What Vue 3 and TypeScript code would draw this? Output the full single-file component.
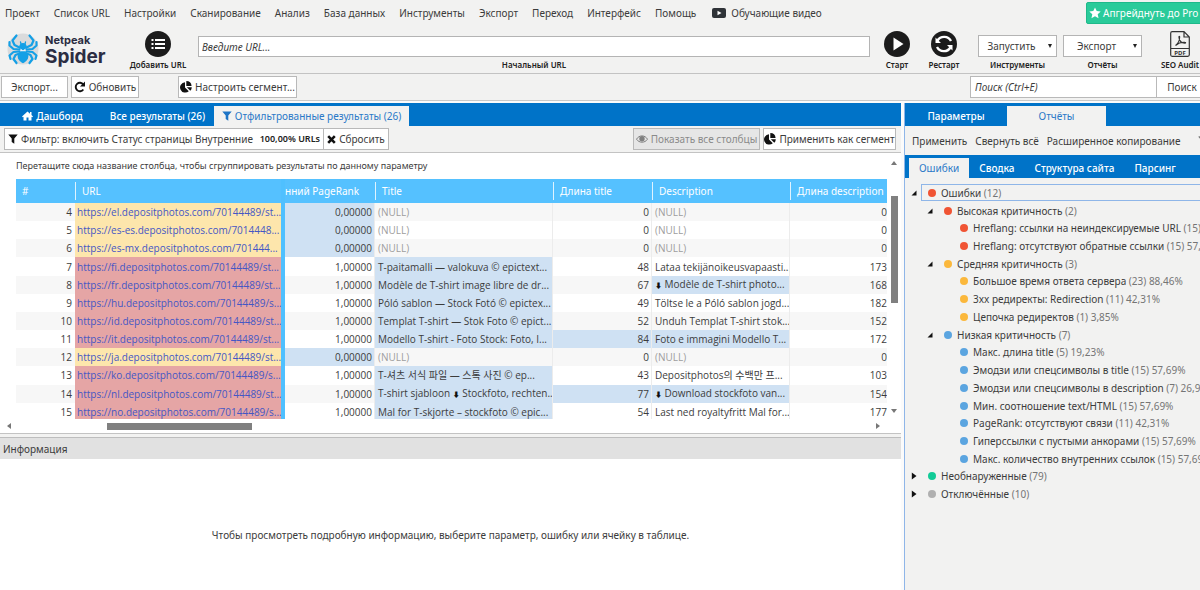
<script setup lang="ts">
import { ref } from 'vue'

type Severity = 'high' | 'mid' | 'low' | 'ok' | 'off'

interface ResultRow {
  id: number
  url: string
  warn: boolean
  rank: string
  title: string
  titleLen: number
  longTitle: boolean
  description: string
  markDescription: boolean
  descriptionLen: number
}

interface TreeRow {
  level: number
  arrow: '' | 'open' | 'closed'
  severity: Severity
  label: string
  stat: string
}

const menu: string[] = [
  'Проект', 'Список URL', 'Настройки', 'Сканирование', 'Анализ', 'База данных',
  'Инструменты', 'Экспорт', 'Переход', 'Интерфейс', 'Помощь',
]

const NULL = '(NULL)'
const DOWN = '⬇'

// Splits a cell text so that the arrow symbol gets its own element.
function parts(text: string): string[] {
  return text.split(/(⬇)/).filter(Boolean)
}

function empty(id: number, url: string): ResultRow {
  return {
    id, url, warn: true, rank: '0,00000', title: NULL, titleLen: 0, longTitle: false,
    description: NULL, markDescription: false, descriptionLen: 0,
  }
}

function filled(
  id: number, url: string, title: string, titleLen: number, longTitle: boolean,
  description: string, markDescription: boolean, descriptionLen: number,
): ResultRow {
  return {
    id, url, warn: false, rank: '1,00000', title, titleLen, longTitle,
    description, markDescription, descriptionLen,
  }
}

const rows: ResultRow[] = [
  empty(4, 'https://el.depositphotos.com/70144489/st...'),
  empty(5, 'https://es-es.depositphotos.com/7014448...'),
  empty(6, 'https://es-mx.depositphotos.com/701444...'),
  filled(7, 'https://fi.depositphotos.com/70144489/st...', 'T-paitamalli — valokuva © epictext...', 48, false, 'Lataa tekijänoikeusvapaasti...', false, 173),
  filled(8, 'https://fr.depositphotos.com/70144489/st...', 'Modèle de T-shirt image libre de dr...', 67, false, '⬇ Modèle de T-shirt photo...', true, 168),
  filled(9, 'https://hu.depositphotos.com/70144489/s...', 'Póló sablon — Stock Fotó © epictex...', 49, false, 'Töltse le a Póló sablon jogd...', false, 182),
  filled(10, 'https://id.depositphotos.com/70144489/st...', 'Templat T-shirt — Stok Foto © epict...', 52, false, 'Unduh Templat T-shirt stok...', false, 152),
  filled(11, 'https://it.depositphotos.com/70144489/st...', 'Modello T-shirt - Foto Stock: Foto, I...', 84, true, 'Foto e immagini Modello T...', true, 172),
  empty(12, 'https://ja.depositphotos.com/70144489/st...'),
  filled(13, 'https://ko.depositphotos.com/70144489/s...', 'T-셔츠 서식 파일 — 스톡 사진 © ep...', 43, false, 'Depositphotos의 수백만 프...', false, 103),
  filled(14, 'https://nl.depositphotos.com/70144489/st...', 'T-shirt sjabloon ⬇ Stockfoto, rechten...', 77, true, '⬇ Download stockfoto van...', true, 154),
  filled(15, 'https://no.depositphotos.com/70144489/s...', 'Mal for T-skjorte – stockfoto © epic...', 54, false, 'Last ned royaltyfritt Mal for...', false, 177),
]

const tree: TreeRow[] = [
  { level: 0, arrow: 'open', severity: 'high', label: 'Ошибки', stat: '(12)' },
  { level: 1, arrow: 'open', severity: 'high', label: 'Высокая критичность', stat: '(2)' },
  { level: 2, arrow: '', severity: 'high', label: 'Hreflang: ссылки на неиндексируемые URL', stat: '(15) 57,69%' },
  { level: 2, arrow: '', severity: 'high', label: 'Hreflang: отсутствуют обратные ссылки', stat: '(15) 57,69%' },
  { level: 1, arrow: 'open', severity: 'mid', label: 'Средняя критичность', stat: '(3)' },
  { level: 2, arrow: '', severity: 'mid', label: 'Большое время ответа сервера', stat: '(23) 88,46%' },
  { level: 2, arrow: '', severity: 'mid', label: '3xx редиректы: Redirection', stat: '(11) 42,31%' },
  { level: 2, arrow: '', severity: 'mid', label: 'Цепочка редиректов', stat: '(1) 3,85%' },
  { level: 1, arrow: 'open', severity: 'low', label: 'Низкая критичность', stat: '(7)' },
  { level: 2, arrow: '', severity: 'low', label: 'Макс. длина title', stat: '(5) 19,23%' },
  { level: 2, arrow: '', severity: 'low', label: 'Эмодзи или спецсимволы в title', stat: '(15) 57,69%' },
  { level: 2, arrow: '', severity: 'low', label: 'Эмодзи или спецсимволы в description', stat: '(7) 26,92%' },
  { level: 2, arrow: '', severity: 'low', label: 'Мин. соотношение text/HTML', stat: '(15) 57,69%' },
  { level: 2, arrow: '', severity: 'low', label: 'PageRank: отсутствуют связи', stat: '(11) 42,31%' },
  { level: 2, arrow: '', severity: 'low', label: 'Гиперссылки с пустыми анкорами', stat: '(15) 57,69%' },
  { level: 2, arrow: '', severity: 'low', label: 'Макс. количество внутренних ссылок', stat: '(15) 57,69%' },
  { level: 0, arrow: 'closed', severity: 'ok', label: 'Необнаруженные', stat: '(79)' },
  { level: 0, arrow: 'closed', severity: 'off', label: 'Отключённые', stat: '(10)' },
]

const startUrl = ref('')
const search = ref('')
</script>

<template>
  <div class="app">
    <header class="header">
      <nav class="menu">
        <button v-for="item in menu" :key="item" type="button">{{ item }}</button>
        <button type="button" class="video">
          <svg width="14" height="10" viewBox="0 0 14 10"><rect width="14" height="10" rx="2" fill="#2f3338" /><path d="M5.5 2.8 9.5 5 5.5 7.2z" fill="#fff" /></svg>
          <span>Обучающие видео</span>
        </button>
        <button type="button" class="upgrade">
          <svg width="12" height="12" viewBox="0 0 24 24"><path d="M12 .8l3.4 7.4 8 .9-6 5.5 1.700 8-7.100-4-7.100 4 1.700-8-6-5.500 8-.9z" fill="#fff" /></svg>
          <span>Апгрейднуть до Pro</span>
        </button>
      </nav>

      <div class="main-bar">
        <div class="logo">
          <svg width="32" height="34" viewBox="0 0 32 34">
            <circle cx="16" cy="17" r="15.500" fill="#dadbdc" />
            <g fill="none" stroke="#14a0e6" stroke-width="2.200" stroke-linecap="round" stroke-linejoin="round">
              <path d="M12.500 15.500 7.500 13 5.500 8.500 9.500 3.500" />
              <path d="M19.500 15.500 24.500 13 26.500 8.500 22.500 3.500" />
              <path d="M12.500 17.500 6.500 17 2.500 13.500 2.500 10" />
              <path d="M19.500 17.500 25.500 17 29.500 13.500 29.500 10" />
              <path d="M12.500 19.500 6.500 20 2.500 23.500 3.500 27" />
              <path d="M19.500 19.500 25.500 20 29.500 23.500 28.500 27" />
              <path d="M12.500 21.500 8.500 23 6.500 27 9.500 31" />
              <path d="M19.500 21.500 23.500 23 25.500 27 22.500 31" />
              <path d="M14 12 13.500 10M18 12 18.500 10" stroke-width="1.300" />
            </g>
            <path d="M16 11c2.500 0 3.800 1.800 3.800 4 0 1.500-.6 2.500-1.500 3.200h-4.600c-.9-.7-1.500-1.700-1.500-3.200 0-2.200 1.300-4 3.800-4z" fill="#14a0e6" />
            <path d="M14 19h4c2.200 1.600 3.300 3.400 3.300 5.500 0 3-2.500 5.500-5.300 6.700-2.800-1.200-5.300-3.700-5.300-6.700 0-2.100 1.100-3.900 3.300-5.500z" fill="#14a0e6" />
            <path d="M13.500 16.500 16 18.500 18.500 16.500V19.200H13.500z" fill="#eef4f8" />
          </svg>
          <div class="logo-text">
            <span class="brand">Netpeak</span>
            <span class="product">Spider</span>
          </div>
        </div>

        <button type="button" class="tool add">
          <svg width="26" height="26" viewBox="0 0 26 26">
            <circle cx="13" cy="13" r="13" fill="#1c1c1c" />
            <path d="M10 9h10M10 13h10M10 17h10" stroke="#fff" stroke-width="2" />
            <path d="M6.500 9h2M6.500 13h2M6.500 17h2" stroke="#fff" stroke-width="2" />
          </svg>
          <span>Добавить URL</span>
        </button>

        <div class="field url">
          <input id="start-url" v-model="startUrl" type="text" placeholder="Введите URL...">
          <label for="start-url">Начальный URL</label>
        </div>

        <button type="button" class="tool start">
          <svg width="26" height="26" viewBox="0 0 26 26"><circle cx="13" cy="13" r="13" fill="#1c1c1c" /><path d="M9.500 6.500 19.500 13 9.500 19.500z" fill="#fff" /></svg>
          <span>Старт</span>
        </button>
        <button type="button" class="tool restart">
          <svg width="26" height="26" viewBox="0 0 26 26">
            <circle cx="13" cy="13" r="13" fill="#1c1c1c" />
            <path d="M6.500 9.500a7.800 7.800 0 0 1 13.500.500" fill="none" stroke="#fff" stroke-width="2.400" />
            <path d="M19.500 16.500a7.800 7.800 0 0 1-13.500-.500" fill="none" stroke="#fff" stroke-width="2.400" />
            <path d="M4.500 6.500v5.500h5.500zM21.500 19.500v-5.500h-5.500z" fill="#fff" />
          </svg>
          <span>Рестарт</span>
        </button>

        <div class="field pick">
          <span class="select"><select id="tools"><option>Запустить</option></select></span>
          <label for="tools">Инструменты</label>
        </div>
        <div class="field pick second">
          <span class="select"><select id="reports"><option>Экспорт</option></select></span>
          <label for="reports">Отчёты</label>
        </div>

        <button type="button" class="tool pdf">
          <svg width="20" height="26" viewBox="0 0 20 26">
            <path d="M.7 17.500V2.200Q.7.700 2.200.700H14l5.300 5.300v11.500M14 .7V6h5.300M.7 17.500h18.600v6.300q0 1.500-1.500 1.500H2.200q-1.500 0-1.500-1.500z" fill="none" stroke="#333" stroke-width="1.200" />
            <path d="M5.500 14.500c2.500-1.800 4-5 4.200-8.500.1-1-.9-1-.8 0 .2 3.500 2.500 6 6 6.300 1 0 1-1 0-1-3.300-.2-6.500.7-9.400 3.200z" fill="none" stroke="#333" stroke-width="1.100" />
            <text x="10" y="23.500" font-size="6" font-weight="700" text-anchor="middle" fill="#333">PDF</text>
          </svg>
          <span>SEO Audit</span>
        </button>
      </div>
    </header>

    <div class="sub-bar">
      <button type="button" class="btn export">Экспорт...</button>
      <button type="button" class="btn refresh">
        <svg width="12" height="12" viewBox="0 0 12 12"><path d="M9.300 8.500a4.200 4.200 0 1 1 0-5" fill="none" stroke="#111" stroke-width="1.900" /><path d="M11 .5v5H6z" fill="#111" /></svg>
        <span>Обновить</span>
      </button>
      <button type="button" class="btn segment">
        <svg width="12" height="12" viewBox="0 0 12 12"><path d="M5 1.200V6.500L8.800 10.200A5.200 5.200 0 1 1 5 1.200z" fill="#111" /><path d="M6.300 0A5.500 5.500 0 0 1 11.600 5H6.300z" fill="#111" /><path d="M6.800 6.200h5a5 5 0 0 1-1.500 3.500z" fill="#111" /></svg>
        <span>Настроить сегмент...</span>
      </button>
      <input v-model="search" type="text" class="search" placeholder="Поиск (Ctrl+E)" aria-label="Поиск">
      <button type="button" class="btn find">Поиск</button>
    </div>

    <div class="workspace">
      <main class="left">
        <div class="tabs">
          <button type="button" class="tab dash">
            <svg width="11" height="10" viewBox="0 0 22 20"><path d="M11 1 0 11l1.500 1.600L3 11.300V19h6v-6h4v6h6v-7.700l1.500 1.300L22 11l-3-2.800V2h-3v3.500z" fill="#fff" /></svg>
            <span>Дашборд</span>
          </button>
          <button type="button" class="tab all">Все результаты (26)</button>
          <button type="button" class="tab filtered active">
            <svg width="10" height="10" viewBox="0 0 10 10"><path d="M.3.500h9.400L6.300 4.500V9.800L3.700 8V4.500z" fill="#1d74c6" /></svg>
            <span>Отфильтрованные результаты (26)</span>
          </button>
        </div>

        <div class="filter-bar">
          <button type="button" class="btn filter">
            <svg width="10" height="10" viewBox="0 0 10 10"><path d="M.3.500h9.400L6.300 4.500V9.800L3.700 8V4.500z" fill="#111" /></svg>
            <span>Фильтр: включить Статус страницы Внутренние</span>
            <strong>100,00% URLs</strong>
          </button>
          <button type="button" class="btn reset">
            <svg width="9" height="9" viewBox="0 0 9 9"><path d="M1.200 1.200 7.800 7.800M7.800 1.200 1.200 7.800" stroke="#111" stroke-width="2.600" /></svg>
            <span>Сбросить</span>
          </button>
          <button type="button" class="btn show" disabled>
            <svg width="12" height="8" viewBox="0 0 12 8"><path d="M.5 4.200C3-.2 9-.2 11.500 4.200 9 8.200 3 8.200.5 4.200z" fill="none" stroke="#808080" /><circle cx="6" cy="3.800" r="2.700" fill="#808080" /></svg>
            <span>Показать все столбцы</span>
          </button>
          <button type="button" class="btn apply">
            <svg width="12" height="12" viewBox="0 0 12 12"><path d="M5 1.200V6.500L8.800 10.200A5.200 5.200 0 1 1 5 1.200z" fill="#111" /><path d="M6.300 0A5.500 5.500 0 0 1 11.600 5H6.300z" fill="#111" /><path d="M6.800 6.200h5a5 5 0 0 1-1.500 3.500z" fill="#111" /></svg>
            <span>Применить как сегмент</span>
          </button>
        </div>

        <section class="grid-area">
          <div class="grid-row">
            <div class="grid-main">
              <p class="group-hint">Перетащите сюда название столбца, чтобы сгруппировать результаты по данному параметру</p>
              <div class="table-wrap">
                <table>
                  <colgroup>
                    <col class="c-id"><col class="c-url"><col class="c-rank"><col class="c-title">
                    <col class="c-tlen"><col class="c-desc"><col class="c-dlen">
                  </colgroup>
                  <thead>
                    <tr>
                      <th><span>#</span></th>
                      <th><span>URL</span></th>
                      <th class="cut"><span>нний PageRank</span></th>
                      <th><span>Title</span></th>
                      <th><span>Длина title</span></th>
                      <th><span>Description</span></th>
                      <th><span>Длина description</span></th>
                    </tr>
                  </thead>
                  <tbody>
                    <tr v-for="row in rows" :key="row.id">
                      <td class="num id">{{ row.id }}</td>
                      <td class="url" :class="row.warn ? 'warn' : 'bad'"><a href="#">{{ row.url }}</a></td>
                      <td class="num rank" :class="{ mark: row.warn }">{{ row.rank }}</td>
                      <td :class="row.warn ? 'null' : 'mark'">
                        <span v-for="(part, p) in parts(row.title)" :key="p" :class="{ down: part === DOWN }">{{ part }}</span>
                      </td>
                      <td class="num" :class="{ mark: row.longTitle }">{{ row.titleLen }}</td>
                      <td :class="{ null: row.warn, mark: row.markDescription }">
                        <span v-for="(part, p) in parts(row.description)" :key="p" :class="{ down: part === DOWN }">{{ part }}</span>
                      </td>
                      <td class="num last">{{ row.descriptionLen }}</td>
                    </tr>
                  </tbody>
                </table>
              </div>
            </div>
            <div class="vscroll">
              <svg width="6" height="4" viewBox="0 0 6 4"><path d="M0 4 3 0 6 4z" fill="#777" /></svg>
              <div class="vtrack"><div class="vthumb"></div></div>
              <svg width="6" height="4" viewBox="0 0 6 4"><path d="M0 0 3 4 6 0z" fill="#777" /></svg>
            </div>
          </div>
          <div class="hscroll">
            <svg width="4" height="6" viewBox="0 0 4 6"><path d="M4 0 0 3 4 6z" fill="#777" /></svg>
            <div class="htrack"><div class="hthumb"></div></div>
            <svg width="4" height="6" viewBox="0 0 4 6"><path d="M0 0 4 3 0 6z" fill="#777" /></svg>
          </div>
        </section>

        <section class="info">
          <h2>Информация</h2>
          <p>Чтобы просмотреть подробную информацию, выберите параметр, ошибку или ячейку в таблице.</p>
        </section>
      </main>

      <aside class="right">
        <div class="tabs">
          <button type="button" class="tab params">Параметры</button>
          <button type="button" class="tab reports active">Отчёты</button>
        </div>
        <div class="report-tools">
          <button type="button">Применить</button>
          <button type="button">Свернуть всё</button>
          <button type="button">Расширенное копирование</button>
          <button type="button" class="more" aria-label="Фильтр">
            <svg width="10" height="10" viewBox="0 0 10 10"><path d="M.8.800h8.400L6 4.500V9.500L4 8V4.500z" fill="none" stroke="#777" /></svg>
          </button>
        </div>
        <div class="tabs inner">
          <button type="button" class="tab active">Ошибки</button>
          <button type="button" class="tab">Сводка</button>
          <button type="button" class="tab">Структура сайта</button>
          <button type="button" class="tab">Парсинг</button>
        </div>
        <ul class="tree">
          <li v-for="(node, i) in tree" :key="node.label" :class="'level-' + node.level">
            <svg class="arrow" width="6" height="8" viewBox="0 0 6 8">
              <path v-if="node.arrow === 'open'" d="M5.500 1.500V6.500H.5z" fill="#111" />
              <path v-else-if="node.arrow === 'closed'" d="M.8.500 5.500 4 .8 7.500z" fill="#111" />
            </svg>
            <span class="node" :class="{ selected: i === 0 }">
              <i class="dot" :class="node.severity"></i>
              <span class="label">{{ node.label }} <small>{{ node.stat }}</small></span>
            </span>
          </li>
        </ul>
      </aside>
    </div>
  </div>
</template>

<style>
html,
body {
  margin: 0;
  background: #f2f2f1;
}
</style>

<style scoped>
.app {
  box-sizing: border-box;
  display: flex;
  flex-direction: column;
  min-height: 100vh;
  overflow: hidden;
  background: #f2f2f1;
  color: #3c3c3c;
  font: 10px/14px "Noto Sans", "Noto Sans CJK KR", "DejaVu Sans", sans-serif;
  white-space: nowrap;
}
.app *,
.app *::before {
  box-sizing: border-box;
}
button,
input,
select {
  margin: 0;
  padding: 0;
  border: 0;
  border-radius: 0;
  background: none;
  color: inherit;
  font: inherit;
  white-space: nowrap;
}
svg {
  flex: none;
  display: block;
}

.header {
  height: 74px;
  border-bottom: 1px solid #c3c3c3;
}
.menu {
  display: flex;
  align-items: center;
  gap: 14px;
  height: 25px;
  padding-left: 5px;
}
.menu button {
  flex: none;
}
.menu .video {
  display: flex;
  align-items: center;
  gap: 5px;
  margin-left: 2px;
}
.menu .upgrade {
  display: flex;
  align-items: center;
  gap: 2px;
  width: 120px;
  height: 22px;
  margin-right: -6px;
  margin-left: auto;
  padding-left: 2px;
  border: 1px solid #1fb98a;
  border-radius: 2px;
  background: #2acb9a;
  color: #fff;
}
.main-bar {
  display: flex;
  height: 48px;
  padding: 6px 0 0 7px;
}
.logo {
  display: flex;
  align-items: center;
  gap: 6px;
  width: 118px;
  height: 36px;
  color: #2b2d42;
  font-family: Inter, "Noto Sans", sans-serif;
}
.logo-text {
  display: flex;
  flex-direction: column;
  padding-top: 2px;
}
.brand {
  font-size: 11px;
  line-height: 13px;
  font-weight: 700;
}
.product {
  font-size: 19px;
  line-height: 19px;
  font-weight: 700;
}
.tool {
  flex: none;
  display: flex;
  flex-direction: column;
  align-items: center;
  justify-content: flex-start;
  height: 42px;
}
.tool span,
.field label {
  padding-top: 1px;
  color: #222;
  font-size: 8px;
  line-height: 13px;
  font-weight: 600;
}
.tool.add {
  width: 66px;
}
.tool.start {
  width: 40px;
  margin-left: 7px;
}
.tool.restart {
  width: 40px;
  margin-left: 7px;
}
.tool.pdf {
  width: 40px;
  margin-left: 18px;
}
.field {
  display: flex;
  flex-direction: column;
  align-items: center;
}
.field.url {
  flex: 1;
  margin-left: 7px;
  padding-top: 5px;
}
.field.url input {
  width: 100%;
  height: 21px;
  padding: 0 3px;
  border: 1px solid #b4b4b4;
  background: #fff;
  font-style: italic;
}
input::placeholder {
  color: #3c3c3c;
  opacity: 1;
}
.field.pick {
  flex: none;
  width: 79px;
  margin-left: 14px;
  padding-top: 4px;
}
.field.pick.second {
  margin-left: 6px;
}
.select {
  position: relative;
  width: 100%;
}
.select::before {
  content: "";
  position: absolute;
  z-index: 1;
  top: 9px;
  right: 5px;
  border: 2px solid transparent;
  border-top: 4px solid #222;
  border-bottom: 0;
}
.select select {
  display: block;
  width: 100%;
  height: 22px;
  padding-right: 12px;
  border: 1px solid #b4b4b4;
  background: #fff;
  appearance: none;
  text-align: center;
  text-align-last: center;
}

.sub-bar {
  display: flex;
  height: 27px;
  padding: 2px 0 3px 1px;
  border-bottom: 1px solid #c9c9c9;
}
.btn {
  flex: none;
  display: flex;
  align-items: center;
  justify-content: center;
  gap: 3px;
  height: 22px;
  border: 1px solid #b9b9b9;
  background: #fff;
}
.export {
  width: 67px;
}
.refresh {
  width: 68px;
  margin-left: 3px;
}
.segment {
  width: 119px;
  margin-left: 39px;
}
.search {
  width: 187px;
  height: 22px;
  margin-left: auto;
  padding: 0 4px;
  border: 1px solid #b9b9b9;
  background: #fff;
  font-style: italic;
}
.find {
  width: 52px;
  margin-right: -8px;
  margin-left: -1px;
}

.workspace {
  flex: 1;
  display: flex;
  gap: 3px;
  padding-top: 2px;
  background: #fbfbfb;
}
.left {
  flex: 1;
  min-width: 0;
  display: flex;
  flex-direction: column;
  background: #f2f2f1;
}
.tabs {
  display: flex;
  align-items: flex-end;
  height: 23px;
  background: #0073c8;
  color: #fff;
}
.tab {
  flex: none;
  display: flex;
  align-items: center;
  justify-content: center;
  gap: 3px;
  height: 20px;
  font-weight: 500;
}
.tab.active {
  background: #f2f2f1;
  color: #2b79c8;
  font-weight: 400;
}
.dash {
  width: 105px;
}
.all {
  width: 105px;
}
.filtered {
  width: 195px;
  margin-left: 4px;
}
.filter-bar {
  display: flex;
  align-items: center;
  height: 27px;
  padding: 0 5px 0 4px;
  border-bottom: 1px solid #c3c3c3;
}
.filter {
  width: 320px;
  justify-content: flex-start;
  padding: 0 3px;
}
.filter strong {
  margin-left: auto;
  color: #222;
  font-size: 9px;
  font-weight: 600;
}
.reset {
  width: 66px;
  margin-left: -1px;
}
.show {
  width: 127px;
  margin-left: auto;
  background: #e6e6e6;
  color: #8a8a8a;
}
.apply {
  width: 133px;
  margin-left: 3px;
}

.grid-area {
  display: flex;
  flex-direction: column;
  height: 281px;
  background: #fff;
  border-bottom: 1px solid #c3c3c3;
}
.grid-row {
  display: flex;
  height: 266px;
}
.grid-main {
  flex: 1;
  min-width: 0;
  padding-left: 16px;
}
.group-hint {
  height: 26px;
  margin: 0;
  font-size: 9px;
  line-height: 26px;
}
.table-wrap {
  position: relative;
  height: 240px;
  overflow: hidden;
}
.table-wrap::before {
  content: "";
  position: absolute;
  top: 0;
  bottom: 0;
  left: 265px;
  width: 4px;
  background: #4fc0ff;
}
table {
  width: 100%;
  height: 242px;
  table-layout: fixed;
  border-collapse: separate;
  border-spacing: 0;
}
.c-id { width: 59px; }
.c-url { width: 206px; }
.c-rank { width: 94px; }
.c-title { width: 178px; }
.c-tlen { width: 99px; }
.c-dlen { width: 97px; }
th {
  height: 24px;
  padding: 0;
  background: #55c1ff;
  color: #fff;
  font-weight: 400;
  text-align: left;
}
th span {
  display: block;
  height: 18px;
  padding-left: 6px;
  border-left: 1px solid #dff3ff;
  line-height: 18px;
}
th:first-child span {
  border-left: 0;
}
th.cut span {
  padding-left: 4px;
  border-left: 0;
}
td {
  height: 18px;
  padding: 0 0 0 3px;
  overflow: hidden;
  border-right: 1px solid #ececec;
  font-family: "Open Sans", "Noto Sans", "Noto Sans CJK KR", "DejaVu Sans", sans-serif;
  line-height: 16px;
}
tbody tr:nth-child(odd) {
  background: #f7f7f7;
}
td.num {
  padding: 0 2px 0 0;
  text-align: right;
}
td.id,
td.last {
  border-right: 0;
}
td.id {
  padding-right: 3px;
}
td.last {
  padding-right: 0;
}
td.url {
  padding-left: 2px;
  border-right: 0;
}
td.url a {
  color: #4557c4;
  text-decoration: none;
}
.down {
  color: #111;
  font-size: 7px;
}
td.warn { background: #fde6ac; }
td.bad { background: #e5a5a5; }
td.mark { background: #cfe1f3; }
td.null { color: #9d9d9d; }
.vscroll {
  width: 14px;
  display: flex;
  flex-direction: column;
  align-items: center;
  padding: 8px 0 6px;
}
.vtrack {
  flex: 1;
  padding-top: 31px;
}
.vthumb {
  width: 7px;
  height: 107px;
  background: #808080;
}
.hscroll {
  display: flex;
  align-items: center;
  height: 14px;
  padding: 0 21px 0 7px;
}
.htrack {
  flex: 1;
  padding-left: 96px;
}
.hthumb {
  width: 145px;
  height: 7px;
  background: #808080;
}

.info {
  flex: 1;
  display: flex;
  flex-direction: column;
  margin-top: 3px;
  background: #fff;
}
.info h2 {
  height: 22px;
  margin: 0;
  padding-left: 3px;
  border-top: 1px solid #bdbdbd;
  background: #e1e1e1;
  font-size: 10px;
  line-height: 22px;
  font-weight: 400;
}
.info p {
  display: flex;
  flex: 1;
  align-items: center;
  justify-content: center;
  margin: 0;
  padding-top: 20px;
}

.right {
  width: 296px;
  overflow: hidden;
  border-left: 1px solid #8fb6e8;
  background: #f2f2f1;
}
.params {
  width: 102px;
}
.reports {
  width: 99px;
}
.report-tools {
  display: flex;
  align-items: center;
  gap: 8px;
  height: 29px;
  padding-left: 7px;
}
.report-tools button {
  flex: none;
}
.report-tools .more {
  margin-left: 9px;
}
.tabs.inner {
  padding-left: 4px;
}
.inner .tab {
  padding: 0 10px;
}
.tree {
  display: grid;
  grid-auto-rows: 1fr;
  height: 319px;
  margin: 6px 0 0;
  padding: 0;
  list-style: none;
}
.tree li {
  display: flex;
  align-items: center;
  padding-left: 6px;
}
.tree .level-1 {
  padding-left: 22px;
}
.tree .level-2 {
  padding-left: 38px;
}
.arrow {
  margin-right: 4px;
}
.node {
  flex: 1;
  display: flex;
  align-items: center;
  gap: 5px;
  height: 17px;
  padding-left: 6px;
  border: 1px solid transparent;
  border-right: 0;
}
.node.selected {
  border-color: #8fb6e8;
}
.dot {
  flex: none;
  width: 8px;
  height: 8px;
  border-radius: 50%;
}
.dot.high { background: #f05434; }
.dot.mid { background: #fbb83c; }
.dot.low { background: #5ba5e0; }
.dot.ok { background: #12cb97; }
.dot.off { background: #b0b0b0; }
.label small {
  color: #757575;
  font-size: 10px;
}
</style>
